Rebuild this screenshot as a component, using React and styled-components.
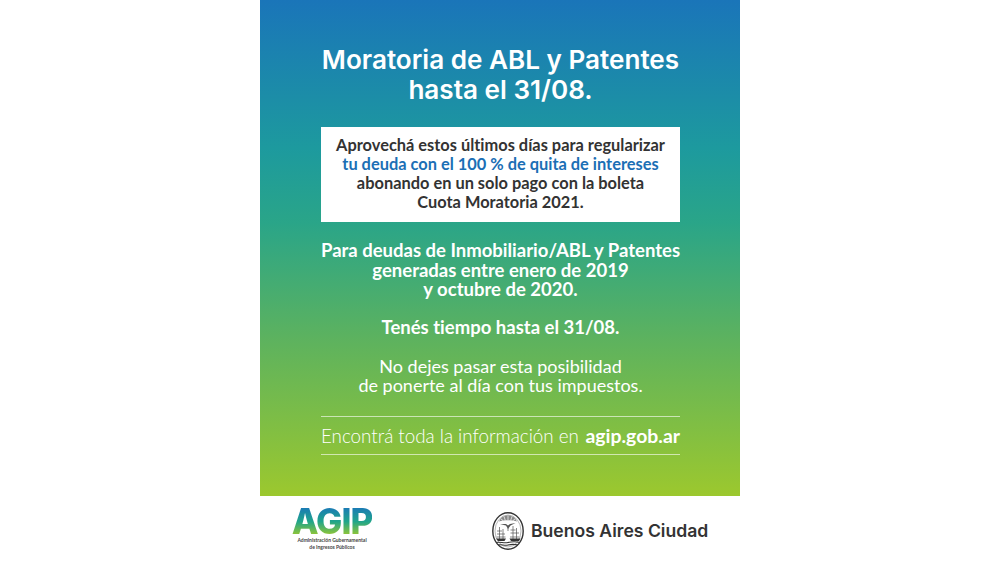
import React from "react";
import styled, { createGlobalStyle } from "styled-components";

const GlobalStyle = createGlobalStyle`
  html, body {
    margin: 0;
    padding: 0;
    background: #fff;
  }
`;

const Page = styled.div`
  width: 1000px;
  height: 565px;
  display: flex;
  flex-direction: column;
  align-items: center;
  overflow: hidden;
  font-family: Lato, "Liberation Sans", sans-serif;
  font-variant-ligatures: none;
`;

const Panel = styled.main`
  width: 480px;
  height: 496px;
  box-sizing: border-box;
  padding: 45px 60px 0 61px;
  display: flex;
  flex-direction: column;
  align-items: stretch;
  color: #fff;
  text-align: center;
  background: linear-gradient(180deg, #1a75b9 0%, #1d9a9e 30%, #2aa588 45%, #5cb25f 68%, #9cc82e 100%);
`;

const Title = styled.h1`
  margin: 0 0 22px;
  font-family: Inter, Lato, sans-serif;
  font-size: 26.1px;
  line-height: 30px;
  font-weight: 600;
  white-space: nowrap;
`;

const Line = styled.span`
  display: block;
  color: ${(p) => p.$color || "inherit"};
`;

const NoticeBox = styled.section`
  height: 95px;
  box-sizing: border-box;
  padding-bottom: 3px;
  display: flex;
  flex-direction: column;
  justify-content: center;
  background: #fff;
  color: #333;
  font-size: 16.4px;
  line-height: 19px;
  font-weight: 700;
  white-space: nowrap;
`;

const Paragraph = styled.p`
  margin: ${(p) => p.$top}px 0 0;
  font-size: ${(p) => p.$size || 18.5}px;
  line-height: 19.5px;
  font-weight: ${(p) => p.$weight || 700};
  white-space: nowrap;
`;

const InfoRow = styled.div`
  margin-top: 20.5px;
  height: 37px;
  display: flex;
  align-items: center;
  justify-content: space-between;
  border-top: 1px solid rgba(255, 255, 255, 0.6);
  border-bottom: 1px solid rgba(255, 255, 255, 0.6);
  font-size: 18.8px;
  font-weight: 300;
  white-space: nowrap;
`;

const Site = styled.b`
  font-size: 19.4px;
  font-weight: 700;
`;

const Footer = styled.footer`
  width: 480px;
  flex: 1;
  display: flex;
  align-items: center;
  padding-left: 33px;
  box-sizing: border-box;
`;

const AgipLogo = styled.div`
  width: 78px;
  display: flex;
  flex-direction: column;
  align-items: center;
  margin-top: -3px;
`;

const AgipMark = styled.span`
  display: block;
  font-family: Inter, Lato, sans-serif;
  font-size: 35px;
  line-height: 29px;
  font-weight: 800;
  letter-spacing: -1px;
  background: linear-gradient(180deg, #1a78b8 0%, #20a58a 50%, #9cc82e 100%);
  -webkit-background-clip: text;
  background-clip: text;
  color: transparent;
`;

const AgipCaption = styled.span`
  margin-top: 1px;
  font-size: 5px;
  line-height: 7px;
  font-weight: 700;
  text-align: center;
  color: #444;
  white-space: nowrap;
`;

const CityLogo = styled.div`
  margin-left: 121px;
  display: flex;
  align-items: center;
  gap: 7px;
  color: #333;
`;

const CityName = styled.span`
  font-family: Inter, Lato, sans-serif;
  font-size: 17.6px;
  font-weight: 600;
  white-space: nowrap;
`;

// escudo de la ciudad: sol, paloma, dos barcos y el rio
function Crest() {
  return (
    <svg width="32" height="38" viewBox="0 0 32 38">
      <ellipse cx="16" cy="19" rx="15.2" ry="18.2" fill="#fff" stroke="#333" strokeWidth="1.4" />
      <ellipse cx="16" cy="19" rx="13" ry="16" fill="none" stroke="#888" strokeWidth="0.6" />
      <path d="M7 9.500C9 5 12.500 3.500 16 3.500S23 5 25 9.500C21 7.800 11 7.800 7 9.500Z" fill="#888" />
      <path d="M16 4v4M12 4.500l1.200 3.500M20 4.500l-1.200 3.500M9 7l2 1.500M23 7l-2 1.500" stroke="#fff" strokeWidth="0.7" />
      <path d="M8 12l6 1.500 2 3.500 2.500-3.500 5-2.500-5.500 1-2 1.500-2-1.500z" fill="#555" />
      <path d="M16 16v3" stroke="#555" strokeWidth="0.7" />
      <path d="M7.500 15v12M11 17v10M5 19h5M5 22h8M4.500 25h9" stroke="#555" strokeWidth="0.7" />
      <path d="M4 26.500h10l-1.500 2.500H6z" fill="#333" />
      <path d="M21 14v13M24.500 16v11M18.500 18h5M18.500 21h8.500M18 25h9.500" stroke="#555" strokeWidth="0.7" />
      <path d="M17.500 26.500h11L27 29h-8z" fill="#333" />
      <path d="M4 30.500c4-1 8 1 12 0s8-1 12 0M6 33c3-.8 7 .8 10 0s7-.8 10 0" fill="none" stroke="#333" strokeWidth="1.1" />
    </svg>
  );
}

export default function App() {
  return (
    <Page>
      <GlobalStyle />
      <Panel>
        <Title>
          <Line>Moratoria de ABL y Patentes</Line>
          <Line>hasta el 31/08.</Line>
        </Title>
        <NoticeBox>
          <Line>Aprovechá estos últimos días para regularizar</Line>
          <Line $color="#1b6fb5">tu deuda con el 100 % de quita de intereses</Line>
          <Line>abonando en un solo pago con la boleta</Line>
          <Line>Cuota Moratoria 2021.</Line>
        </NoticeBox>
        <Paragraph $top={19}>
          <Line>Para deudas de Inmobiliario/ABL y Patentes</Line>
          <Line>generadas entre enero de 2019</Line>
          <Line>y octubre de 2020.</Line>
        </Paragraph>
        <Paragraph $top={18}>Tenés tiempo hasta el 31/08.</Paragraph>
        <Paragraph $top={19.5} $weight={400} $size={18}>
          <Line>No dejes pasar esta posibilidad</Line>
          <Line>de ponerte al día con tus impuestos.</Line>
        </Paragraph>
        <InfoRow>
          <span>Encontrá toda la información en</span>
          <Site>agip.gob.ar</Site>
        </InfoRow>
      </Panel>
      <Footer>
        <AgipLogo>
          <AgipMark>AGIP</AgipMark>
          <AgipCaption>
            <Line>Administración Gubernamental</Line>
            <Line>de Ingresos Públicos</Line>
          </AgipCaption>
        </AgipLogo>
        <CityLogo>
          <Crest />
          <CityName>Buenos Aires Ciudad</CityName>
        </CityLogo>
      </Footer>
    </Page>
  );
}
